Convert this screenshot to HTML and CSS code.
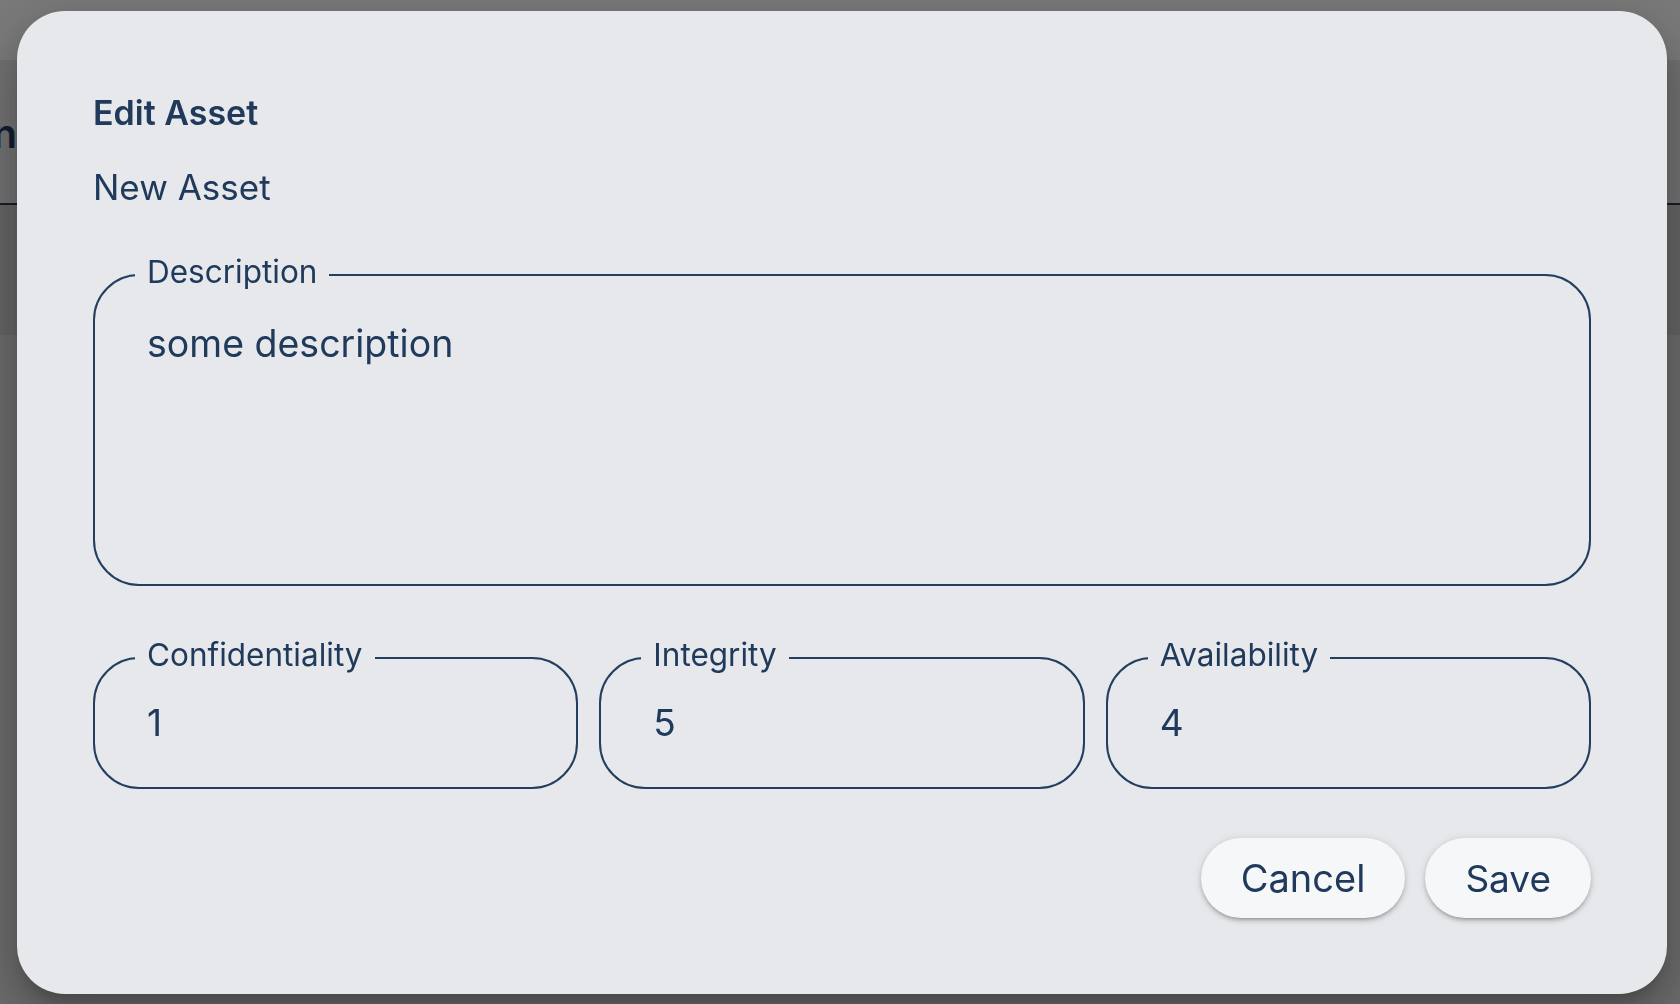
FILE: index.html
```html
<!DOCTYPE html>
<html lang="en">
<head>
<meta charset="utf-8">
<title>Edit Asset</title>
<link rel="stylesheet" href="styles.css">
</head>
<body>
<div class="page">
  <div class="topbar"></div>
  <div class="header">
    <div class="crumb"><span class="crumb-text">Asset Registration</span></div>
  </div>
  <div class="toolbar"></div>
  <div class="content"></div>
</div>

<div class="backdrop">
  <div class="dialog" role="dialog" aria-labelledby="dlg-title">
    <h2 class="dialog-title" id="dlg-title">Edit Asset</h2>
    <p class="dialog-subtitle">New Asset</p>

    <fieldset class="field field-desc">
      <legend class="field-label">Description</legend>
      <div class="field-value desc-value">some description</div>
    </fieldset>

    <div class="field-row">
      <fieldset class="field field-small">
        <legend class="field-label">Confidentiality</legend>
        <div class="field-value num-value">1</div>
      </fieldset>
      <fieldset class="field field-small">
        <legend class="field-label">Integrity</legend>
        <div class="field-value num-value">5</div>
      </fieldset>
      <fieldset class="field field-small">
        <legend class="field-label">Availability</legend>
        <div class="field-value num-value">4</div>
      </fieldset>
    </div>

    <div class="actions">
      <button class="btn btn-cancel" type="button">Cancel</button>
      <button class="btn btn-save" type="button">Save</button>
    </div>
  </div>
</div>
</body>
</html>
```

FILE: styles.css
```css
* { box-sizing: border-box; }

html, body {
  margin: 0;
  padding: 0;
  height: 100%;
  overflow: hidden;
}

body {
  font-family: "Inter", "Liberation Sans", sans-serif;
  color: #203a5c;
  background: #d4d4d4;
}

/* underlying page (dimmed by the backdrop) */
.page {
  height: 100%;
  display: flex;
  flex-direction: column;
}
.topbar {
  height: 60px;
  background: #f2f2f2;
}
.header {
  height: 145px;
  background: #e0e0e0;
  border-bottom: 2px solid #2b3b4c;
  padding-top: 50px;
}
.crumb {
  width: 17px;
  overflow: hidden;
  display: flex;
  justify-content: flex-end;
  white-space: nowrap;
}
.crumb-text {
  font-size: 40px;
  line-height: 48px;
  font-weight: 600;
  color: #1e3a5f;
}
.toolbar {
  height: 130px;
  background: #c6c6c6;
}
.content {
  flex: 1;
  background: #d4d4d4;
}

/* modal */
.backdrop {
  position: fixed;
  inset: 0;
  background: rgba(0, 0, 0, 0.5);
  display: flex;
  align-items: flex-start;
}
.dialog {
  margin: 11px 13px 0 17px;
  width: 1650px;
  height: 983px;
  background: #e6e8ec;
  border-radius: 48px;
  padding: 76px;
  display: flex;
  flex-direction: column;
  box-shadow:
    0 11px 15px -7px rgba(0, 0, 0, 0.2),
    0 24px 38px 3px rgba(0, 0, 0, 0.14),
    0 9px 46px 8px rgba(0, 0, 0, 0.12);
}

.dialog-title {
  margin: 0;
  font-size: 34px;
  line-height: 52px;
  font-weight: 600;
  color: #203a5c;
}
.dialog-subtitle {
  margin: 22px 0 0;
  font-size: 35px;
  line-height: 52px;
  font-weight: 400;
  color: #203a5c;
}

.field {
  margin: 0;
  border: 2px solid #233e5f;
  border-radius: 46px;
  padding: 0 40px;
  min-width: 0;
}
.field-label {
  padding: 0 12px 5px;
  font-size: 31.5px;
  line-height: 44px;
  color: #203a5c;
}
.field-value {
  padding-left: 12px;
  color: #203a5c;
}

.field-desc {
  margin-top: 37px;
}
.desc-value {
  font-size: 37.5px;
  line-height: 57px;
  padding-top: 16px;
  height: 285px;
}

.field-row {
  margin-top: 47px;
  display: grid;
  grid-template-columns: repeat(3, 1fr);
  gap: 21px;
}
.num-value {
  font-size: 37px;
  line-height: 56px;
  padding-top: 13px;
  height: 105px;
}

.actions {
  margin-top: 49px;
  display: flex;
  justify-content: flex-end;
  gap: 20px;
}
.btn {
  height: 80px;
  padding: 0 40px;
  border: none;
  border-radius: 40px;
  background: #f6f7f9;
  font-family: "Inter", "Liberation Sans", sans-serif;
  font-size: 37px;
  font-weight: 400;
  color: #203a5c;
  box-shadow:
    0 3px 3px -2px rgba(0, 0, 0, 0.2),
    0 3px 4px 0 rgba(0, 0, 0, 0.14),
    0 1px 8px 0 rgba(0, 0, 0, 0.12);
  cursor: pointer;
}
.btn-cancel {
  font-size: 38px;
}
```
